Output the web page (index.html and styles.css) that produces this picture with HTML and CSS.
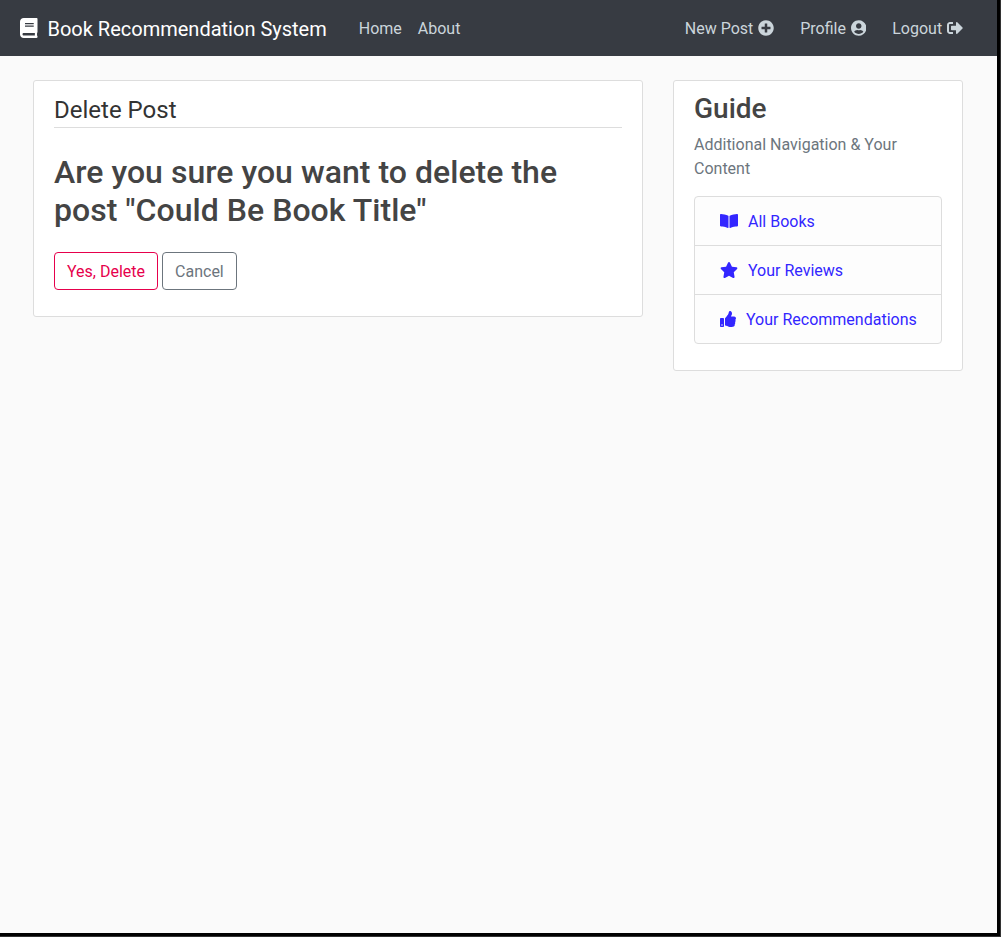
FILE: index.html
```html
<!DOCTYPE html>
<html lang="en">
<head>
<meta charset="utf-8">
<title>Delete Post</title>
<link rel="stylesheet" href="styles.css">
</head>
<body>
<div class="frame">
<div class="page">
  <header class="navbar">
    <a class="brand"><svg class="icon brand-icon" viewBox="0 0 448 512"><path d="M448 360V24c0-13.3-10.7-24-24-24H96C43 0 0 43 0 96v320c0 53 43 96 96 96h328c13.3 0 24-10.7 24-24v-16c0-7.500-3.500-14.300-8.900-18.700-4.200-15.400-4.200-59.300 0-74.700 5.400-4.300 8.900-11.100 8.900-18.600zM128 134c0-3.300 2.700-6 6-6h212c3.300 0 6 2.700 6 6v20c0 3.300-2.700 6-6 6H134c-3.300 0-6-2.700-6-6v-20zm0 64c0-3.300 2.700-6 6-6h212c3.300 0 6 2.700 6 6v20c0 3.300-2.700 6-6 6H134c-3.300 0-6-2.700-6-6v-20zm253.400 250H96c-17.700 0-32-14.300-32-32 0-17.600 14.400-32 32-32h285.400c-1.900 17.100-1.900 46.900 0 64z"/></svg><span class="brand-name">Book Recommendation System</span></a>
    <nav class="nav-main">
      <a class="nav-link">Home</a>
      <a class="nav-link">About</a>
    </nav>
    <nav class="nav-user">
      <a class="nav-link">New Post <svg class="icon" viewBox="0 0 512 512"><path d="M256 8C119 8 8 119 8 256s111 248 248 248 248-111 248-248S393 8 256 8zm144 276c0 6.600-5.400 12-12 12h-92v92c0 6.600-5.400 12-12 12h-56c-6.600 0-12-5.400-12-12v-92h-92c-6.600 0-12-5.400-12-12v-56c0-6.600 5.400-12 12-12h92v-92c0-6.600 5.400-12 12-12h56c6.600 0 12 5.400 12 12v92h92c6.600 0 12 5.400 12 12v56z"/></svg></a>
      <a class="nav-link">Profile <svg class="icon" viewBox="0 0 496 512"><path d="M248 8C111 8 0 119 0 256s111 248 248 248 248-111 248-248S385 8 248 8zm0 96c48.600 0 88 39.400 88 88s-39.400 88-88 88-88-39.400-88-88 39.400-88 88-88zm0 344c-58.700 0-111.300-26.600-146.500-68.200 18.800-35.400 55.600-59.800 98.500-59.800 2.400 0 4.800.4 7.100 1.100 13 4.200 26.600 6.900 40.900 6.900 14.300 0 28-2.700 40.900-6.900 2.300-.7 4.700-1.100 7.100-1.100 42.900 0 79.700 24.400 98.500 59.800C359.300 421.400 306.700 448 248 448z"/></svg></a>
      <a class="nav-link">Logout <svg class="icon" viewBox="0 0 512 512"><path d="M497 273L329 441c-15 15-41 4.500-41-17v-96H152c-13.300 0-24-10.700-24-24v-96c0-13.300 10.700-24 24-24h136V88c0-21.400 25.900-32 41-17l168 168c9.300 9.400 9.300 24.600 0 34zM192 436v-40c0-6.600-5.400-12-12-12H96c-17.700 0-32-14.300-32-32V160c0-17.700 14.300-32 32-32h84c6.600 0 12-5.400 12-12V76c0-6.600-5.400-12-12-12H96c-53 0-96 43-96 96v192c0 53 43 96 96 96h84c6.600 0 12-5.400 12-12z"/></svg></a>
    </nav>
  </header>
  <main class="content">
    <section class="card card-post">
      <div class="legend">Delete Post</div>
      <h2 class="question">Are you sure you want to delete the post "Could Be Book Title"</h2>
      <div class="actions">
        <button class="btn btn-danger">Yes, Delete</button>
        <a class="btn btn-secondary">Cancel</a>
      </div>
    </section>
    <aside class="card card-guide">
      <h3 class="guide-title">Guide</h3>
      <p class="guide-text">Additional Navigation &amp; Your Content</p>
      <ul class="list">
        <li class="list-item"><svg class="icon" viewBox="0 0 576 512"><path d="M542.220 32.050c-54.800 3.110-163.720 14.430-230.960 55.590-4.640 2.840-7.270 7.890-7.270 13.170v363.870c0 11.550 12.630 18.850 23.280 13.490 69.180-34.820 169.230-44.320 218.700-46.920 16.890-.89 30.020-14.430 30.020-30.660V62.750c.01-17.710-15.350-31.740-33.770-30.700zM264.730 87.640C197.500 46.480 88.580 35.170 33.780 32.050 15.360 31.010 0 45.040 0 62.750V400.600c0 16.240 13.130 29.780 30.020 30.660 49.490 2.600 149.590 12.110 218.770 46.950 10.620 5.350 23.210-1.940 23.210-13.460V100.630c0-5.290-2.620-10.140-7.270-12.990z"/></svg><span class="list-label">All Books</span></li>
        <li class="list-item"><svg class="icon" viewBox="0 0 576 512"><path d="M259.300 17.800L194 150.200 47.900 171.500c-26.200 3.800-36.700 36.100-17.700 54.600l105.700 103-25 145.500c-4.500 26.300 23.200 46 46.400 33.700L288 439.600l130.700 68.700c23.200 12.200 50.900-7.400 46.400-33.700l-25-145.500 105.700-103c19-18.500 8.500-50.800-17.700-54.600L382 150.200 316.700 17.800c-11.700-23.600-45.600-23.900-57.400 0z"/></svg><span class="list-label">Your Reviews</span></li>
        <li class="list-item"><svg class="icon" viewBox="0 0 512 512"><path d="M104 224H24c-13.255 0-24 10.745-24 24v240c0 13.255 10.745 24 24 24h80c13.255 0 24-10.745 24-24V248c0-13.255-10.745-24-24-24zM64 472c-13.255 0-24-10.745-24-24s10.745-24 24-24 24 10.745 24 24-10.745 24-24 24zM384 81.452c0 42.416-25.970 66.208-33.277 94.548h101.723c33.397 0 59.397 27.746 59.553 58.098.084 17.938-7.546 37.249-19.439 49.197l-.11.11c9.836 23.337 8.237 56.037-9.308 79.469 8.681 25.895-.069 57.704-16.382 74.757 4.298 17.598 2.244 32.575-6.148 44.632C440.202 511.587 389.616 512 346.839 512l-2.845-.001c-48.287-.017-87.806-17.598-119.560-31.725-15.957-7.099-36.821-15.887-52.651-16.178-6.540-.12-11.783-5.457-11.783-11.998v-213.770c0-3.200 1.282-6.271 3.558-8.521 39.614-39.144 56.648-80.587 89.117-113.111 14.804-14.832 20.188-37.236 25.393-58.902C282.515 39.293 291.817 0 312 0c24 0 72 8 72 81.452z"/></svg><span class="list-label">Your Recommendations</span></li>
      </ul>
    </aside>
  </main>
</div>
</div>
</body>
</html>
```

FILE: styles.css
```css
* { box-sizing: border-box; }
body {
  margin: 0;
  font-family: Roboto, sans-serif;
  font-size: 16px;
  line-height: 1.5;
  color: #444;
}
.frame {
  height: 937px;
  border: solid #333;
  border-width: 0 1px 1px 0;
}
.page {
  height: 936px;
  border: solid #000;
  border-width: 0 3px 3px 0;
  background: #fafafa;
}
.icon {
  height: 1em;
  fill: currentColor;
  vertical-align: -0.125em;
}
.navbar {
  display: flex;
  align-items: center;
  height: 56px;
  padding: 0 26px 0 20px;
  background: #373b42;
}
.brand {
  display: flex;
  align-items: center;
  gap: 10px;
  margin-right: 24px;
  font-size: 20px;
  line-height: 28px;
  color: #fff;
}
.brand-name { padding-top: 2px; }
.nav-main { display: flex; }
.nav-user {
  display: flex;
  gap: 10px;
  margin-left: auto;
}
.nav-link {
  padding: 9px 8px 7px;
  color: #cbd5db;
}
.nav-link .icon { margin-left: 0.9px; }
.content {
  display: flex;
  align-items: flex-start;
  gap: 30px;
  padding: 24px 33px;
}
.card {
  padding: 10px 20px 26px;
  border: 1px solid #ddd;
  border-radius: 3px;
  background: #fff;
}
.card-post { width: 610px; }
.card-guide { width: 290px; }
.legend {
  margin-bottom: 25px;
  padding-top: 2px;
  border-bottom: 1px solid #ddd;
  font-size: 24px;
  line-height: 34px;
  color: #333;
}
.question {
  margin: 0 0 22px;
  font-size: 32px;
  font-weight: 500;
  line-height: 1.2;
  letter-spacing: 0.03px;
}
.actions {
  display: flex;
  gap: 4px;
}
.btn {
  padding: 7px 12px 5px;
  border: 1px solid;
  border-radius: 4px;
  background: transparent;
  font: inherit;
}
.btn-danger { color: #e6004c; }
.btn-secondary { color: #6c757d; border-color: #6c757d; }
.guide-title {
  margin: 0 0 7px;
  padding-top: 1px;
  font-size: 28px;
  font-weight: 500;
  line-height: 1.2;
}
.guide-text {
  margin: 0 0 15px;
  color: #6c757d;
}
.list {
  margin: 0;
  padding: 0;
  list-style: none;
  border: 1px solid #ddd;
  border-radius: 4px;
  background: #fdfdfd;
}
.list-item {
  display: flex;
  align-items: center;
  gap: 10px;
  padding: 12px 24px 12px 25px;
  color: #3326ff;
  white-space: nowrap;
}
.list-label {
  padding-top: 2px;
  line-height: 22px;
}
.list-item + .list-item { border-top: 1px solid #ddd; }
```
